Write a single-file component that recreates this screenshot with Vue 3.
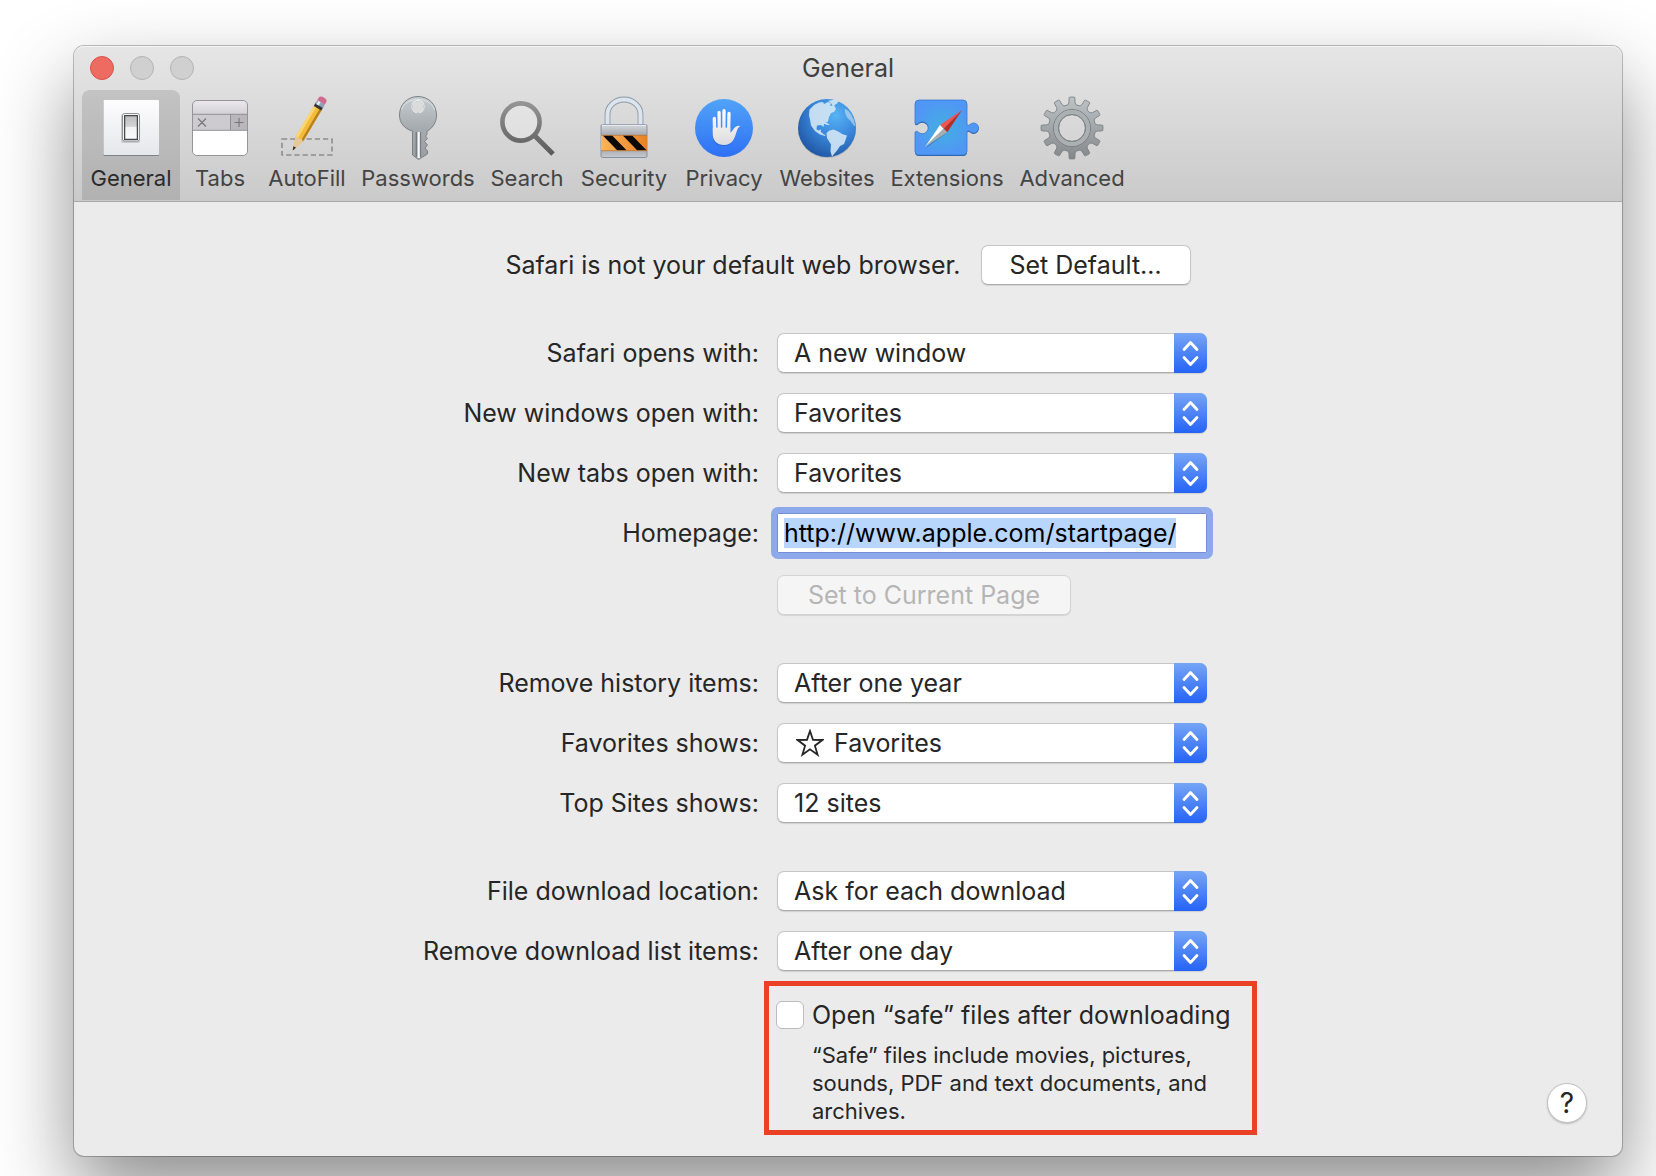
<template>
  <main class="desktop">
    <section class="window" aria-labelledby="window-title">
      <header class="window-header">
        <div class="titlebar">
          <div class="lights">
            <button type="button" class="light light-close" aria-label="Close"></button>
            <button type="button" class="light" aria-label="Minimize" disabled></button>
            <button type="button" class="light" aria-label="Zoom" disabled></button>
          </div>
          <h1 id="window-title">{{ activeTab }}</h1>
        </div>

        <nav class="toolbar" aria-label="Preferences">
          <button
            v-for="tab in tabs"
            :key="tab"
            type="button"
            class="tab"
            :class="{ active: tab === activeTab }"
            @click="activeTab = tab"
          >
            <svg v-if="tab === 'General'" class="tab-icon" viewBox="0 0 64 64">
              <defs>
                <linearGradient id="plate" x1="0" y1="0" x2="0" y2="1">
                  <stop offset="0" stop-color="#fdfdfe" />
                  <stop offset="1" stop-color="#e6e7eb" />
                </linearGradient>
                <linearGradient id="rocker" x1="0" y1="0" x2="0" y2="1">
                  <stop offset="0" stop-color="#bdbdbf" />
                  <stop offset="0.45" stop-color="#d2d2d4" />
                  <stop offset="0.5" stop-color="#f2f2f4" />
                  <stop offset="1" stop-color="#fafafc" />
                </linearGradient>
              </defs>
              <rect x="4.500" y="5" width="55.500" height="55" rx="1" fill="#7f8186" />
              <rect x="4.500" y="4" width="55.500" height="55" rx="1" fill="url(#plate)" />
              <rect x="22" y="18" width="19" height="29" rx="2" fill="#c9cacd" />
              <rect x="23.5" y="17.5" width="17" height="27.5" rx="2" fill="#fff" stroke="#8f9092" />
              <rect x="25.6" y="19.6" width="12.8" height="23.8" fill="url(#rocker)" stroke="#47484a" stroke-width="1.3" />
            </svg>

            <svg v-else-if="tab === 'Tabs'" class="tab-icon" viewBox="0 0 64 64">
              <defs>
                <linearGradient id="tabbar" x1="0" y1="0" x2="0" y2="1">
                  <stop offset="0" stop-color="#ebe9ec" />
                  <stop offset="1" stop-color="#d3d1d5" />
                </linearGradient>
              </defs>
              <rect x="4.5" y="4.5" width="55" height="55" rx="4.5" fill="#fff" />
              <path d="M4.5 18V9a4.500 4.500 0 0 1 4.500-4.500h46a4.500 4.500 0 0 1 4.500 4.500v9z" fill="url(#tabbar)" />
              <path d="M4.500 18h38v16h-38z" fill="#cdcbcf" />
              <path d="M42.500 18h17v16h-17z" fill="#b9b7bb" />
              <path d="M4.500 18.300h55M4.500 34.300h55M42.500 18v16" stroke="#929094" fill="none" />
              <path d="M10 22.500l8 8M18 22.500l-8 8M46.500 26.500h9M51 22v9" stroke="#77757a" stroke-width="1.100" />
              <rect x="4.5" y="4.500" width="55" height="55" rx="4.500" fill="none" stroke="#8c8b8e" stroke-width="0.900" />
            </svg>

            <svg v-else-if="tab === 'AutoFill'" class="tab-icon" viewBox="0 0 64 64">
              <rect x="7" y="43" width="50" height="16" fill="none" stroke="#8d8d8d" stroke-width="1.600" stroke-dasharray="5.200 3" />
              <g transform="translate(17.700 54.500) rotate(30.500)">
                <path d="M0 0L-4.400-13V-50h8.800v37z" fill="#f3bc3c" />
                <path d="M-4.400-13V-50h2.500v38z" fill="#fbd774" />
                <path d="M2-12l2.400-1V-50H2z" fill="#b98119" />
                <path d="M0 0L-4.400-13l2-1.500 2.400 1.500 2-1.500 2.400 1.500z" fill="#e7c69c" />
                <path d="M0 0L-1.500-4h3z" fill="#2c2824" />
                <path d="M-4.400-53h8.800v4h-8.800z" fill="#33353a" />
                <path d="M-4.400-56h8.800v4h-8.800z" fill="#8fa2b5" />
                <path d="M-3-56h2.500v4H-3z" fill="#e5edf3" />
                <path d="M-4.400-56v-2.500q0-3 4.400-3t4.400 3v2.500z" fill="#d2698e" />
              </g>
            </svg>

            <svg v-else-if="tab === 'Passwords'" class="tab-icon" viewBox="0 0 64 64">
              <defs>
                <linearGradient id="key" x1="0" y1="0" x2="0" y2="1">
                  <stop offset="0" stop-color="#c6cccf" />
                  <stop offset="0.500" stop-color="#a5abae" />
                  <stop offset="1" stop-color="#9a9ea3" />
                </linearGradient>
              </defs>
              <path
                fill-rule="evenodd"
                d="M32 0.500c10.500 0 18.500 8 18.500 18.500 0 8-4.500 13.500-9.500 16.200v3.300l-1.500 1.500 2 2.500-3 3 3 3.500-2.500 3 2.500 3v3l-9 5.500-6-4.500V35.200C18 32.500 13.500 27 13.500 19 13.500 8.500 21.500 0.500 32 0.500zM32 4.500a6 6 0 1 0 0 12.500 6 6 0 0 0 0-12.500z"
                fill="url(#key)"
                stroke="#74797d"
                stroke-width="0.900"
              />
              <path d="M15.500 14C19 0 45 0 48.500 14" fill="none" stroke="#e0e6e8" stroke-width="1" />
              <path d="M31.300 36h2.600v26h-2.600z" fill="#f6f8f9" />
              <path d="M29.600 36h1.700v25.500l-1.700-1.300zM33.900 36h1.200v25h-1.200z" fill="#777c82" />
              <circle cx="32" cy="10.700" r="6.300" fill="none" stroke="#e8ecee" stroke-width="1.200" />
            </svg>

            <svg v-else-if="tab === 'Search'" class="tab-icon" viewBox="0 0 64 64">
              <defs>
                <linearGradient id="lens" gradientUnits="userSpaceOnUse" x1="0" y1="5" x2="0" y2="60">
                  <stop offset="0" stop-color="#969696" />
                  <stop offset="1" stop-color="#595959" />
                </linearGradient>
              </defs>
              <circle cx="26" cy="26" r="18.600" fill="#fff" fill-opacity="0.250" stroke="url(#lens)" stroke-width="4.600" />
              <path d="M39.500 39.500L58 58" stroke="url(#lens)" stroke-width="5" />
            </svg>

            <svg v-else-if="tab === 'Security'" class="tab-icon" viewBox="0 0 64 64">
              <defs>
                <linearGradient id="lock" x1="0" y1="0" x2="0" y2="1">
                  <stop offset="0" stop-color="#d5d9dd" />
                  <stop offset="0.300" stop-color="#a9adb3" />
                  <stop offset="0.750" stop-color="#a9adb3" />
                  <stop offset="1" stop-color="#c6c9ce" />
                </linearGradient>
                <linearGradient id="hazard" x1="0" y1="0" x2="1" y2="0">
                  <stop offset="0" stop-color="#f9b65a" />
                  <stop offset="1" stop-color="#e97f26" />
                </linearGradient>
              </defs>
              <path d="M15.500 29V18.500a16.500 15 0 0 1 33 0V29" fill="none" stroke="#8d99aa" stroke-width="5.800" />
              <path d="M15.500 29V18.500a16.500 15 0 0 1 33 0V29" fill="none" stroke="#dce5ec" stroke-width="4" />
              <rect x="9" y="28.500" width="46" height="33" rx="1.500" fill="url(#lock)" stroke="#7f8aa0" stroke-width="0.900" />
              <path d="M10 29.300h44" stroke="#edf0f3" />
              <path d="M9 39.300h46v15.400H9z" fill="url(#hazard)" />
              <path d="M10.800 39.600h9.400l14.300 14.600h-9.300zM30.800 39.600h9.400l14.300 14.600h-9.300z" fill="#0b0906" />
              <path d="M9 39.300h46M9 54.700h46" stroke="#b87029" stroke-width="0.700" />
            </svg>

            <svg v-else-if="tab === 'Privacy'" class="tab-icon" viewBox="0 0 64 64">
              <defs>
                <linearGradient id="privacy" x1="0" y1="0" x2="0" y2="1">
                  <stop offset="0" stop-color="#51a3f8" />
                  <stop offset="1" stop-color="#2e70f5" />
                </linearGradient>
                <linearGradient id="palm" gradientUnits="userSpaceOnUse" x1="0" y1="13" x2="0" y2="49">
                  <stop offset="0" stop-color="#fff" />
                  <stop offset="1" stop-color="#dcdcde" />
                </linearGradient>
              </defs>
              <circle cx="32" cy="32" r="29" fill="url(#privacy)" />
              <g fill="#1c4fae" fill-opacity="0.450" transform="translate(0 1)">
                <path d="M20.500 30h18v5l3.500-3q3.500-3 5.500-2-2 3-4.500 9-3 10-11.500 10Q20.500 49 20.500 37z" />
              </g>
              <g fill="none" stroke="url(#palm)" stroke-width="3.300" stroke-linecap="round">
                <path d="M22.300 22.400L22.600 36M27.100 16.500L27.300 36M32 14.700L31.900 36M37 17.500L36.600 36" />
              </g>
              <path
                d="M20.700 31.500h17.600v5c3-1.500 3-6.500 9-6.800.6 0 .7.500.300.900-3.300 3.100-3.300 8.900-6.400 13.600-2 3.100-5.200 4.800-9.200 4.800-7 0-11.300-4.500-11.300-11z"
                fill="url(#palm)"
              />
            </svg>

            <svg v-else-if="tab === 'Websites'" class="tab-icon" viewBox="0 0 64 64">
              <defs>
                <radialGradient id="globe" cx="0.650" cy="0.280" r="0.750">
                  <stop offset="0" stop-color="#59b3f5" />
                  <stop offset="0.500" stop-color="#3a88dc" />
                  <stop offset="1" stop-color="#2259a6" />
                </radialGradient>
              </defs>
              <circle cx="32" cy="33" r="29" fill="#000" fill-opacity="0.150" />
              <circle cx="32" cy="32" r="29" fill="url(#globe)" />
              <g fill="#cfe4f3" fill-opacity="0.920">
                <path
                  d="M14.500 13.500L19 9l5-2.500 4-.5 1 2 4-2 3 1-1 3 4-1 2 4-2 3-3 1-2 4-1 4.500-4 2.500-.500 3-2.500-2-4 .500-.500 4 2.500 1 1.500-1.500.500 3 3 2.500 1.500.500-.500 1-5-1.500-5-3.500-4-5.500-1-6-1-4z"
                />
                <path d="M33 5l7-1.500 4 1.500-2 2.500-4 2.500-2-3zM27 26.500l5 .500 3 1.500-3 .500z" />
                <path d="M31.500 37l3-2.500 4-1 3.500 1.500 3 1.500 2 1.500 5 1.500-1.500 4.500-1.500 4-4 2-3 4.500-2.500 3-2.500 3-1.500-5 .500-7-4-6.500z" />
                <path d="M49.500 12.500l4 2.500 3 4 2.500 5 1.200 6-1.500-.500-2.700-4-4-4-1.500-3.500z" fill-opacity="0.600" />
              </g>
            </svg>

            <svg v-else-if="tab === 'Extensions'" class="tab-icon" viewBox="0 0 64 64">
              <defs>
                <radialGradient id="piece" gradientUnits="userSpaceOnUse" cx="28" cy="32" r="27">
                  <stop offset="0" stop-color="#43b0df" />
                  <stop offset="1" stop-color="#5097f5" />
                </radialGradient>
              </defs>
              <g>
                <path :d="puzzlePath" transform="translate(0 1)" fill="#2e5b9f" />
                <path :d="puzzlePath" fill="url(#piece)" stroke="#3b78cd" stroke-width="0.800" />
              </g>
              <path d="M11 52L27 30.500l5.500 6z" fill="#1d4f80" fill-opacity="0.350" />
              <path d="M47 14L25 29l3.700 3.700z" fill="#f0564d" />
              <path d="M47 14L32.300 36.300l-3.600-3.600z" fill="#bd2b27" />
              <path d="M10 51l15-22 3.700 3.700z" fill="#fff" />
              <path d="M10 51l22.300-14.700-3.600-3.600z" fill="#a9adb0" />
            </svg>

            <svg v-else class="tab-icon" viewBox="0 0 64 64">
              <defs>
                <linearGradient id="gear" gradientUnits="userSpaceOnUse" x1="0" y1="1" x2="0" y2="63">
                  <stop offset="0" stop-color="#bcc3c6" />
                  <stop offset="1" stop-color="#85888b" />
                </linearGradient>
              </defs>
              <path :d="gearPath" fill="url(#gear)" stroke="#7d8184" stroke-width="0.900" fill-rule="evenodd" stroke-linejoin="round" />
              <circle cx="32" cy="32" r="18.500" fill="none" stroke="#7d8184" stroke-width="1" />
              <circle cx="32" cy="32" r="16" fill="none" stroke="#abb0b3" stroke-width="4" />
              <circle cx="32" cy="32" r="13.500" fill="none" stroke="#7d8184" stroke-width="1" />
            </svg>

            <span>{{ tab }}</span>
          </button>
        </nav>
      </header>

      <div class="pane">
        <form class="settings" @submit.prevent>
          <div class="default-browser">
            <span>Safari is not your default web browser.</span>
            <button type="button" class="push set-default">Set Default…</button>
          </div>

          <div v-for="(group, index) in groups" :key="index" class="group">
            <template v-for="field in group" :key="field.id">
              <label :for="field.id">{{ field.label }}</label>
              <div class="popup">
                <svg v-if="field.star" class="star" viewBox="0 0 28 28" aria-hidden="true">
                  <path d="M14 2l3 8.900 9.400.1-7.500 5.700 2.700 9L14 20.300 6.400 25.700l2.700-9L1.600 11l9.400-.1z" />
                </svg>
                <select :id="field.id" v-model="field.value" :class="{ 'has-star': field.star }">
                  <option>{{ field.value }}</option>
                </select>
                <span class="stepper" aria-hidden="true">
                  <svg viewBox="0 0 33 40">
                    <path d="M10 16.500l6.500-7 6.500 7M10 24.500l6.500 7 6.500-7" />
                  </svg>
                </span>
              </div>
            </template>

            <template v-if="index === 0">
              <label for="homepage">Homepage:</label>
              <input id="homepage" ref="homepageInputs" v-model="homepage" class="homepage" type="text" spellcheck="false" />
              <button type="button" class="push current-page" disabled>Set to Current Page</button>
            </template>
          </div>

          <div class="safe-files">
            <input id="safe-files" v-model="openSafeFiles" type="checkbox" aria-describedby="safe-files-note" />
            <label for="safe-files">Open “safe” files after downloading</label>
            <p id="safe-files-note">“Safe” files include movies, pictures, sounds, PDF and text documents, and archives.</p>
          </div>
        </form>

        <button type="button" class="help" aria-label="Help">?</button>
      </div>
    </section>
  </main>
</template>

<script setup>
import { onMounted, reactive, ref } from 'vue';

const tabs = [
  'General',
  'Tabs',
  'AutoFill',
  'Passwords',
  'Search',
  'Security',
  'Privacy',
  'Websites',
  'Extensions',
  'Advanced',
];
const activeTab = ref('General');

const groups = reactive([
  [
    { id: 'opens-with', label: 'Safari opens with:', value: 'A new window' },
    { id: 'new-windows', label: 'New windows open with:', value: 'Favorites' },
    { id: 'new-tabs', label: 'New tabs open with:', value: 'Favorites' },
  ],
  [
    { id: 'history', label: 'Remove history items:', value: 'After one year' },
    { id: 'favorites', label: 'Favorites shows:', value: 'Favorites', star: true },
    { id: 'top-sites', label: 'Top Sites shows:', value: '12 sites' },
  ],
  [
    { id: 'download-location', label: 'File download location:', value: 'Ask for each download' },
    { id: 'download-list', label: 'Remove download list items:', value: 'After one day' },
  ],
]);

const homepage = ref('http://www.apple.com/startpage/');
// the field sits inside v-for, so the ref holds an array
const homepageInputs = ref([]);
const openSafeFiles = ref(false);

const puzzlePath =
  'M4 4h44a4 4 0 0 1 4 4v20.500q1.500 1.500 3 0a5 5 0 1 1 0 7q-1.500-1.500-3 0V55a4 4 0 0 1-4 4H4a4 4 0 0 1-4-4V36q1.500-1.500 3 0a6 6 0 1 0 0-8.500q-1.500 1.500-3 0V8a4 4 0 0 1 4-4z';

// twelve tapered teeth round a ring with a hole in the middle
function buildGear() {
  const point = (radius, degrees) => {
    const angle = (degrees * Math.PI) / 180;
    return `${(32 + radius * Math.sin(angle)).toFixed(2)} ${(32 - radius * Math.cos(angle)).toFixed(2)}`;
  };
  const points = [];
  for (let i = 0; i < 12; i += 1) {
    const a = i * 30;
    points.push(point(23.5, a - 10), point(25.5, a - 7), point(30.5, a - 5.5), point(31, a - 4));
    points.push(point(31, a + 4), point(30.5, a + 5.5), point(25.5, a + 7), point(23.5, a + 10));
  }
  return `M${points.join('L')}ZM32 18.500a13.500 13.500 0 1 0 0 27 13.500 13.500 0 0 0 0-27z`;
}
const gearPath = buildGear();

onMounted(() => {
  const [input] = [homepageInputs.value].flat();
  if (input) {
    input.focus();
    input.select();
  }
});
</script>

<style>
body {
  margin: 0;
  background: #fff;
}
</style>

<style scoped>
.desktop {
  box-sizing: border-box;
  min-height: 100vh;
  padding: 46px 34px 20px 74px;
  overflow: hidden;
  font-family: Inter, "Liberation Sans", sans-serif;
  font-size: 25px;
  line-height: 32px;
  color: #262626;
}

button,
input,
select {
  box-sizing: border-box;
  margin: 0;
  font: inherit;
  color: inherit;
}

.window {
  border-radius: 10px;
  background: #ebebeb;
  box-shadow:
    0 0 0 1px rgba(0, 0, 0, 0.24),
    0 36px 80px rgba(0, 0, 0, 0.45);
}

.window-header {
  border-bottom: 1px solid #a8a8a8;
  border-radius: 10px 10px 0 0;
  background: linear-gradient(#e6e6e6, #cacaca);
  box-shadow: inset 0 1px 0 #f4f4f4;
}

.titlebar {
  display: grid;
  grid-template-columns: 1fr auto 1fr;
  align-items: center;
  height: 44px;
  padding: 0 16px;
}

.titlebar h1 {
  margin: 0;
  font-size: 25px;
  font-weight: 400;
  color: #404040;
}

.lights {
  display: flex;
  gap: 16px;
}

.light {
  width: 24px;
  height: 24px;
  padding: 0;
  border: 1px solid #b3b3b3;
  border-radius: 50%;
  background: #d0d0d0;
}

.light-close {
  border-color: #d9534a;
  background: #ed6b60;
}

.toolbar {
  display: grid;
  grid-template-columns: 98px 80px 94px 128px 90px 104px 96px 110px 130px 120px;
  height: 111px;
  padding: 0 8px;
}

.tab {
  display: flex;
  flex-direction: column;
  align-items: center;
  gap: 4px;
  height: 110px;
  padding: 6px 0 0;
  border: 0;
  border-radius: 8px 8px 0 0;
  background: none;
  font-size: 22px;
  line-height: 28px;
  color: #444;
  white-space: nowrap;
}

.tab.active {
  background: rgba(0, 0, 0, 0.12);
  color: #2b2b2b;
}

.tab-icon {
  width: 64px;
  height: 64px;
  overflow: visible;
}

.pane {
  display: grid;
  padding: 43px 35px 21px;
}

.settings {
  grid-area: 1 / 1;
  justify-self: center;
  display: grid;
  gap: 48px;
  width: 864px;
}

.default-browser {
  display: flex;
  justify-content: center;
  align-items: center;
  gap: 20px;
}

.push {
  height: 40px;
  padding: 0;
  border: 1px solid #c6c6c6;
  border-bottom-color: #acacac;
  border-radius: 7px;
  background: #fff;
  box-shadow: 0 1px 1px rgba(0, 0, 0, 0.1);
}

.push:disabled {
  border-color: #d4d4d4;
  background: #f5f5f5;
  color: #b5b5b5;
}

.set-default {
  width: 210px;
}

.group {
  display: grid;
  grid-template-columns: 343px 430px;
  gap: 20px 18px;
  align-items: center;
}

.group label {
  justify-self: end;
  white-space: nowrap;
}

.popup {
  position: relative;
  height: 40px;
}

.popup select {
  appearance: none;
  width: 100%;
  height: 40px;
  padding: 0 40px 0 16px;
  border: 1px solid #c6c6c6;
  border-bottom-color: #acacac;
  border-radius: 7px;
  background: #fff;
  box-shadow: 0 1px 1px rgba(0, 0, 0, 0.12);
}

.popup select.has-star {
  padding-left: 56px;
}

.star {
  position: absolute;
  top: 6px;
  left: 19px;
  width: 28px;
  height: 28px;
  fill: none;
  stroke: #262626;
  stroke-width: 1.8;
  pointer-events: none;
}

.stepper {
  position: absolute;
  top: 0;
  right: 0;
  width: 33px;
  height: 40px;
  border-radius: 0 7px 7px 0;
  background: linear-gradient(#76a5f5, #2463f6);
  pointer-events: none;
}

.stepper svg {
  display: block;
  fill: none;
  stroke: #fff;
  stroke-width: 2.8;
  stroke-linecap: round;
  stroke-linejoin: round;
}

.homepage {
  width: 430px;
  height: 40px;
  padding: 0 6px;
  border: 1px solid #7390d6;
  outline: 6px solid #8ea9eb;
  outline-offset: 0;
  background: #fff;
  border-radius: 1px;
  color: #000;
}

.homepage::selection {
  background: #b8d6fb;
  color: #000;
}

.current-page {
  grid-column: 2;
  width: 294px;
  margin-top: 2px;
}

.safe-files {
  box-sizing: border-box;
  display: grid;
  grid-template-columns: 28px 1fr;
  column-gap: 8px;
  align-items: center;
  width: 493px;
  margin: -38px 0 0 348px;
  padding: 13px 7px 5px;
  border: 5px solid #ea4025;
}

.safe-files label {
  white-space: nowrap;
}

.safe-files input {
  appearance: none;
  width: 28px;
  height: 28px;
  border: 1px solid #bcbcbc;
  border-radius: 6px;
  background: #fff;
}

.safe-files input:checked {
  background: #2463f6;
}

.safe-files p {
  grid-column: 2;
  width: 410px;
  margin: 10px 0 0;
  font-size: 22px;
  line-height: 28px;
}

.help {
  grid-area: 1 / 1;
  justify-self: end;
  align-self: end;
  width: 40px;
  height: 40px;
  margin-bottom: 12px;
  padding: 0;
  border: 1px solid #c2c2c2;
  border-radius: 50%;
  background: #fff;
  box-shadow: 0 1px 2px rgba(0, 0, 0, 0.2);
  font-size: 28px;
}
</style>
